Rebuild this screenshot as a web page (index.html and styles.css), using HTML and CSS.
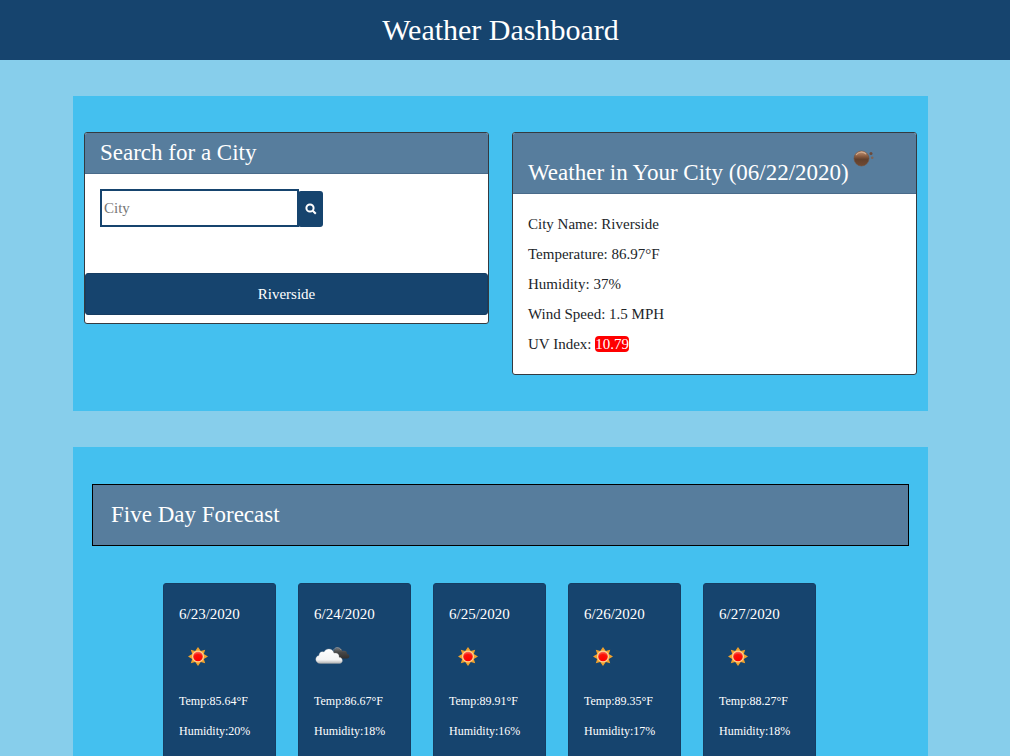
FILE: index.html
```html
<!DOCTYPE html>
<html lang="en">
<head>
<meta charset="utf-8">
<meta name="viewport" content="width=device-width, initial-scale=1">
<title>Weather Dashboard</title>
<link rel="stylesheet" href="styles.css">
</head>
<body>
<svg class="sprite" aria-hidden="true">
  <defs>
    <radialGradient id="sun-core" cx=".5" cy=".8" r=".8"><stop offset="0" stop-color="#ff0000"/><stop offset=".6" stop-color="#fa1208"/><stop offset="1" stop-color="#ff8a70"/></radialGradient>
    <linearGradient id="cloud-light" x1="0" y1="0" x2="0" y2="1"><stop offset="0" stop-color="#fff"/><stop offset=".75" stop-color="#f4f4f4"/><stop offset="1" stop-color="#b0b0b0"/></linearGradient>
    <linearGradient id="cloud-dark" x1="0" y1="0" x2="0" y2="1"><stop offset="0" stop-color="#777"/><stop offset=".4" stop-color="#484848"/><stop offset="1" stop-color="#303030"/></linearGradient>
    <linearGradient id="dust" x1="0" y1="0" x2="0" y2="1"><stop offset="0" stop-color="#c49a7c"/><stop offset=".35" stop-color="#8a5c40"/><stop offset=".55" stop-color="#61402c"/><stop offset="1" stop-color="#704a32"/></linearGradient>
    <symbol id="sun" viewBox="0 0 50 50">
      <path fill="#f2a22c" d="M25 16l2.800 4.100 4.400-1.400-1.400 4.400 4.200 2.400-4.200 2.400 1.400 4.400-4.400-1.400L25 35l-2.800-4.100-4.400 1.400 1.400-4.400-4.200-2.400 4.200-2.400-1.400-4.400 4.400 1.400z"/>
      <circle cx="25" cy="25.500" r="5.400" fill="url(#sun-core)" stroke="#ffd596" stroke-width="1.200"/>
    </symbol>
    <symbol id="clouds" viewBox="0 0 50 50">
      <path fill="url(#cloud-dark)" d="M26 27a4 4 0 0 1 0-7c1-4 7-4 8.500 0 3-.8 5 1 4.500 3 3.500.3 3 4.500 0 4.500H28z"/>
      <path fill="none" stroke="#999" stroke-width=".9" d="M25.500 19.500c1-3.500 6-4 7.500-.5"/>
      <path fill="url(#cloud-light)" stroke="#aaa" stroke-width=".3" d="M12.500 32.500c-6 0-6-7.500-1.500-8 0-3.500 2.500-4.500 5-3.500 2-4.500 9-4 10 1.200 3.500-.5 5.500 1.300 5 4 4.500.3 4.500 6.300.5 6.300z"/>
    </symbol>
    <symbol id="mist" viewBox="0 0 50 50">
      <circle cx="24.500" cy="25.500" r="7.500" fill="url(#dust)" stroke="#76503b" stroke-width=".6"/>
      <path d="M19 22c2-3 7-4 10-1" fill="none" stroke="#d1aa8c" stroke-width="1.200"/>
      <circle cx="34" cy="20.500" r="1.500" fill="#6b493a"/><circle cx="35.200" cy="24.800" r="1.300" fill="#806355"/>
    </symbol>
  </defs>
</svg>
<header class="banner"><h1 class="banner-title">Weather Dashboard</h1></header>
<main class="page">
  <section class="panel panel-top">
    <div class="card">
      <h2 class="card-header">Search for a City</h2>
      <form class="search">
        <input class="search-input" type="text" placeholder="City" aria-label="City">
        <button class="search-button" type="button" aria-label="Search">
          <svg class="search-icon" viewBox="0 0 12 12" aria-hidden="true"><circle cx="5" cy="5" r="3.600"/><path d="M7.800 7.800l3 3"/></svg>
        </button>
      </form>
      <button class="city" type="button">Riverside</button>
    </div>
    <div class="card">
      <h2 class="card-header card-header-icon">Weather in Your City (06/22/2020)<svg class="weather-icon" role="img" aria-label="Mist"><use href="#mist"/></svg></h2>
      <div class="details">
        <p class="line">City Name: Riverside</p>
        <p class="line">Temperature: 86.97°F</p>
        <p class="line">Humidity: 37%</p>
        <p class="line">Wind Speed: 1.5 MPH</p>
        <p class="line">UV Index: <span class="uv">10.79</span></p>
      </div>
    </div>
  </section>
  <section class="panel">
    <h2 class="forecast-title">Five Day Forecast</h2>
    <div class="days">
      <article class="day"><h3 class="date">6/23/2020</h3><svg class="weather-icon" role="img" aria-label="Sunny"><use href="#sun"/></svg><p class="stat">Temp:85.64°F</p><p class="stat">Humidity:20%</p></article>
      <article class="day"><h3 class="date">6/24/2020</h3><svg class="weather-icon" role="img" aria-label="Cloudy"><use href="#clouds"/></svg><p class="stat">Temp:86.67°F</p><p class="stat">Humidity:18%</p></article>
      <article class="day"><h3 class="date">6/25/2020</h3><svg class="weather-icon" role="img" aria-label="Sunny"><use href="#sun"/></svg><p class="stat">Temp:89.91°F</p><p class="stat">Humidity:16%</p></article>
      <article class="day"><h3 class="date">6/26/2020</h3><svg class="weather-icon" role="img" aria-label="Sunny"><use href="#sun"/></svg><p class="stat">Temp:89.35°F</p><p class="stat">Humidity:17%</p></article>
      <article class="day"><h3 class="date">6/27/2020</h3><svg class="weather-icon" role="img" aria-label="Sunny"><use href="#sun"/></svg><p class="stat">Temp:88.27°F</p><p class="stat">Humidity:18%</p></article>
    </div>
  </section>
</main>
</body>
</html>
```
FILE: styles.css
```css
* { box-sizing: border-box; }
body {
  margin: 0;
  background: #87ceeb;
  color: #212529;
  font: 15px/30px "Liberation Serif", "Times New Roman", serif;
}
h1, h2, h3, p { margin: 0; font-weight: 400; }
.sprite { position: absolute; width: 0; height: 0; }
.banner { padding: 12px 9px 12px 0; background: #16446e; color: #fff; text-align: center; }
.banner-title { font-size: 30px; line-height: 36px; }
.page { display: flex; flex-direction: column; gap: 36px; padding: 36px 82px 36px 73px; }
.panel { padding: 36px 11px; background: #44c0ef; }
.panel-top { display: flex; align-items: flex-start; gap: 23px; }
.card { flex: 1; min-width: 0; background: #fff; border: 1px solid #343a40; border-radius: 3px; overflow: hidden; }
.card-header {
  padding: 6px 15px;
  background: #577d9d;
  border-bottom: 1px solid #496b8a;
  color: #fff;
  font-size: 23px;
  line-height: 28px;
}
.card-header-icon { display: flex; align-items: flex-end; padding: 0 15px 6px; }
.weather-icon { display: block; width: 50px; height: 50px; margin-left: -6px; }
.card-header-icon .weather-icon { margin: 0 0 4px -12px; }
.search { display: flex; align-items: flex-end; padding: 15px 15px 46px; }
.search-input {
  width: 199px;
  height: 38px;
  padding: 0 2px;
  border: 2px solid #16446e;
  font: inherit;
}
.search-input::placeholder { color: #757575; opacity: 1; }
.search-button {
  display: grid;
  place-items: center;
  width: 25px;
  height: 36px;
  margin-left: -1px;
  padding: 0;
  border: 0;
  border-radius: 3px;
  background: #16446e;
}
.search-icon { width: 12px; height: 12px; fill: none; stroke: #fff; stroke-width: 2; }
.city {
  display: block;
  width: 100%;
  height: 42px;
  margin-bottom: 8px;
  border: 1px solid #163d62;
  border-radius: 3px;
  background: #16446e;
  color: #fff;
  font: inherit;
}
.details { padding: 15px; }
.uv { border-radius: 4px; background: #f00; color: #fff; }
.forecast-title {
  margin: 1px 8px 37px;
  padding: 15px 18px;
  border: 1px solid #000;
  background: #577d9d;
  color: #fff;
  font-size: 23px;
  line-height: 30px;
}
.days { display: flex; justify-content: center; gap: 22px; padding-right: 22px; }
.day {
  width: 113px;
  padding: 15px;
  border: 1px solid #163d62;
  border-radius: 3px;
  background: #16446e;
  color: #fff;
}
.date { margin-bottom: 2px; font-size: 15px; line-height: 30px; }
.day .weather-icon { margin-bottom: 5px; }
.stat { font-size: 12px; line-height: 30px; }
```
